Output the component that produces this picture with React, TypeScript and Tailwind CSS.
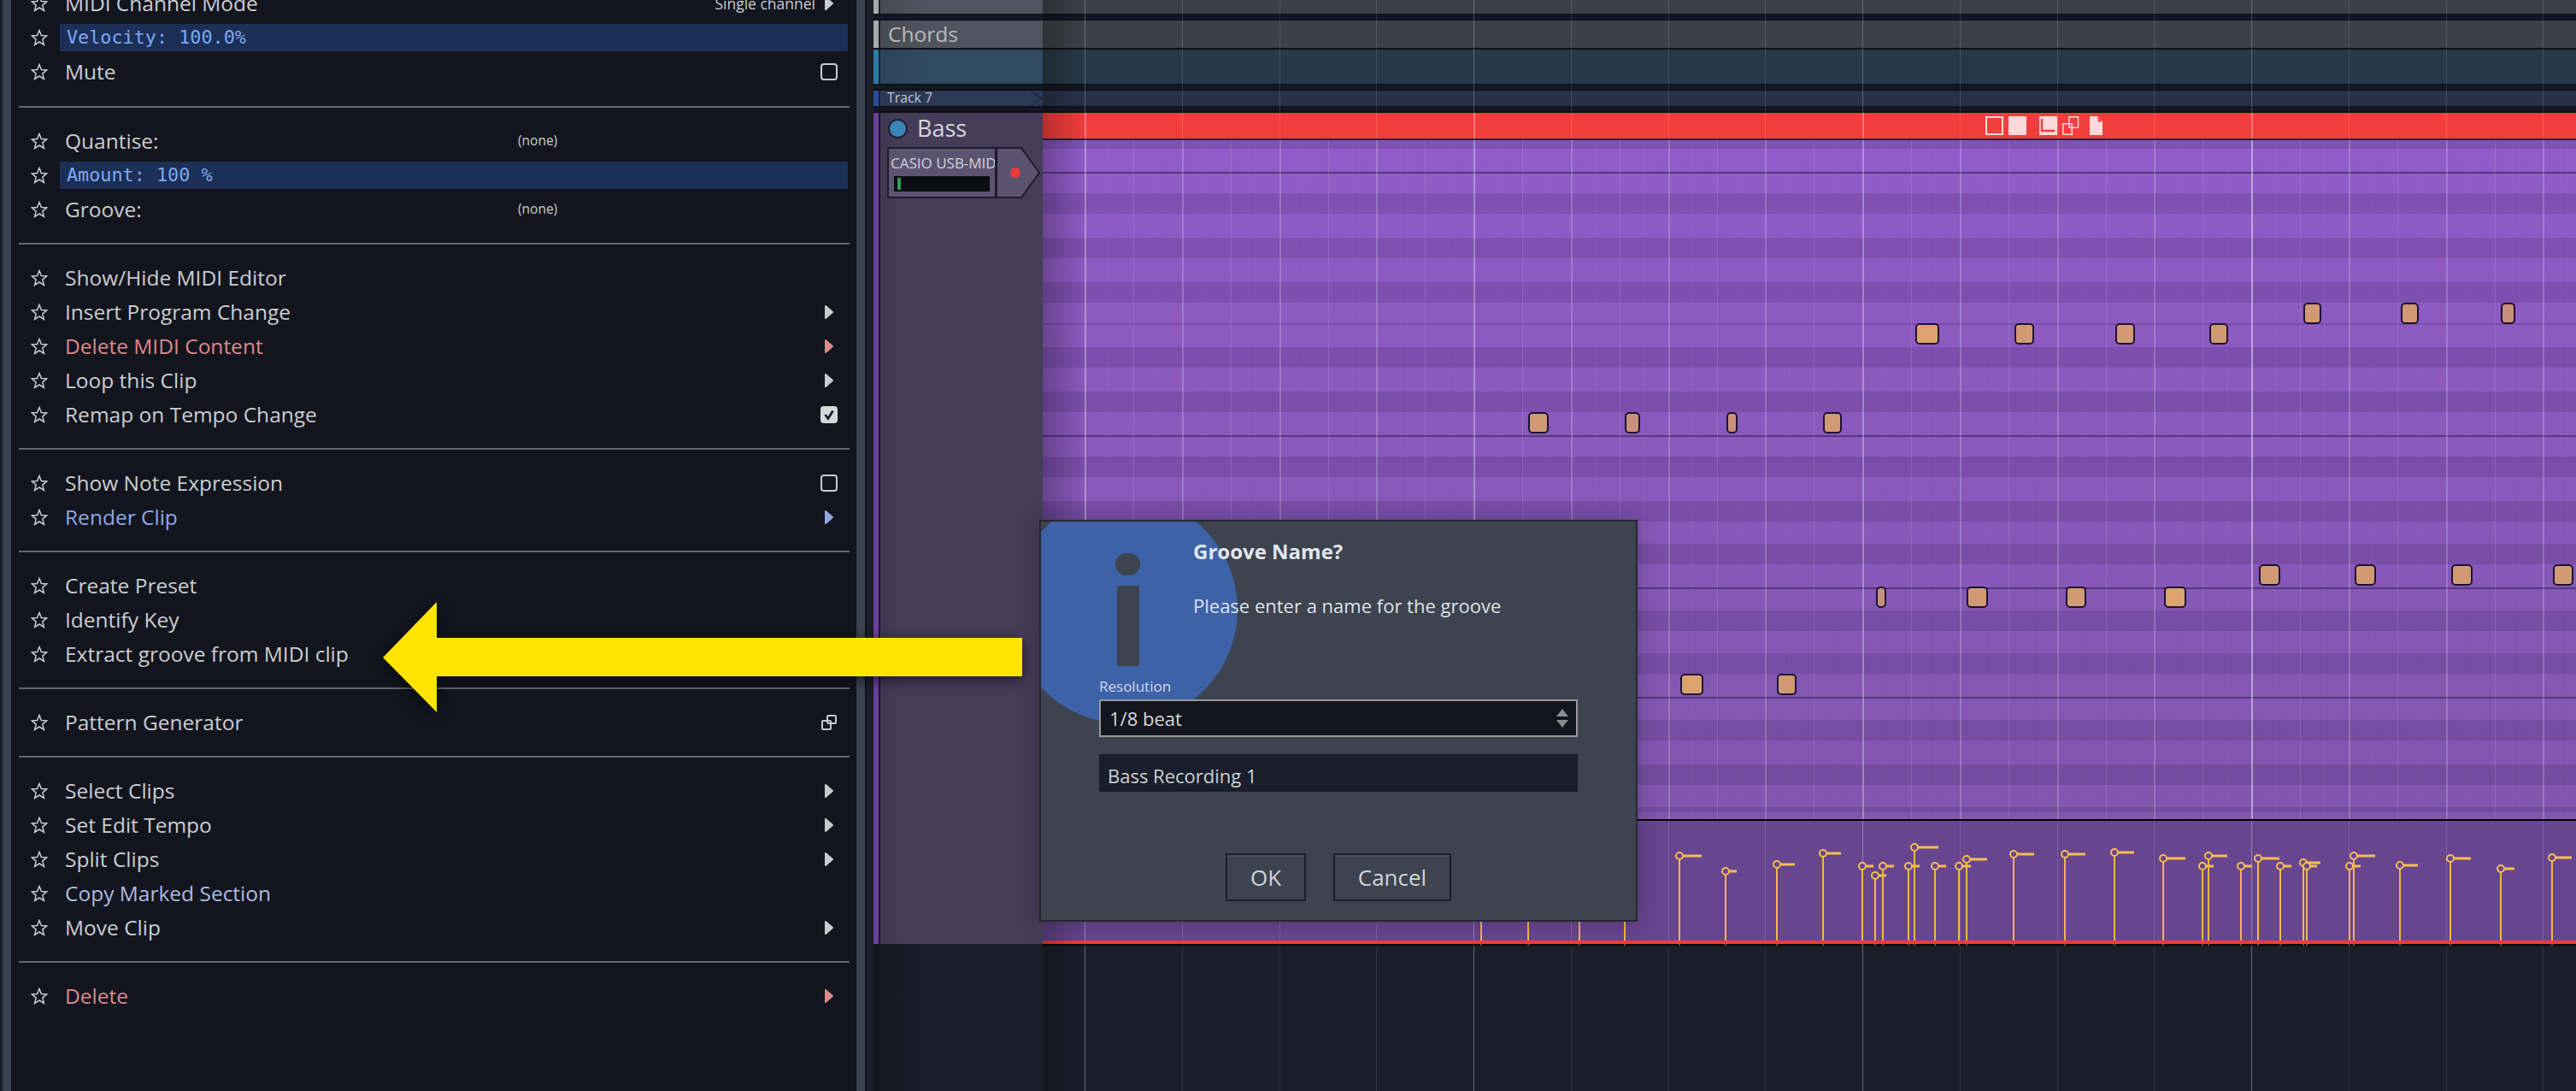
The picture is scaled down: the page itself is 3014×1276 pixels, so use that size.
import React from "react";

const GRID_START = 1269;
const GRID_STEP = 113.75;
const beats = Array.from({ length: 16 }, (_, i) => i);

// dark piano-key stripes, [top, bottom] in page pixels
const stripes = [
  [164, 174], [226, 250], [278, 302], [330, 354], [406, 430], [458, 482], [534, 558],
  [586, 610], [636, 660], [714, 738], [764, 788], [842, 866], [894, 918], [944, 950],
];
const octaveLines = [201, 378, 509, 687, 815];

// [left, right, top]
const notes = [
  [2241, 2269, 378], [2357, 2380, 378], [2475, 2498, 378], [2585, 2607, 378],
  [2695, 2716, 354], [2809, 2830, 354], [2926, 2943, 354],
  [1788, 1812, 482], [1901, 1919, 482], [2020, 2033, 482], [2133, 2155, 482],
  [2643, 2668, 660], [2755, 2780, 660], [2868, 2893, 660], [2987, 3011, 660],
  [2195, 2207, 686], [2301, 2326, 686], [2417, 2441, 686], [2532, 2558, 686],
  [1966, 1993, 788], [2079, 2102, 788],
];

// [x, y, tail end x]
const velocities = [
  [1732, 1030, 1760], [1787, 1030, 1815], [1847, 1030, 1875], [1900, 1006, 1916],
  [1964, 1001, 1991], [2018, 1019, 2032], [2078, 1011, 2100], [2132, 998, 2154],
  [2178, 1013, 2192], [2193, 1024, 2207], [2202, 1013, 2216], [2232, 1013, 2246],
  [2239, 991, 2268], [2263, 1013, 2277], [2291, 1013, 2306], [2300, 1005, 2325],
  [2355, 999, 2380], [2415, 999, 2440], [2473, 997, 2497], [2530, 1004, 2557],
  [2576, 1013, 2590], [2583, 1001, 2606], [2621, 1013, 2635], [2641, 1004, 2667],
  [2667, 1013, 2681], [2694, 1009, 2715], [2698, 1013, 2711], [2748, 1013, 2762],
  [2753, 1001, 2779], [2807, 1012, 2829], [2866, 1004, 2891], [2925, 1016, 2942],
  [2985, 1003, 3009],
];

function noteFill(width: number) {
  if (width >= 26) return "#dca36f";
  if (width >= 20) return "#d19a75";
  return "#c8907b";
}

function Star() {
  return (
    <svg viewBox="0 0 20 20" className="w-5 h-5 shrink-0">
      <polygon
        points="10,1.5 12.4,7.6 18.6,8 13.8,12.1 15.4,18.4 10,15 4.6,18.4 6.2,12.1 1.4,8 7.6,7.6"
        fill="none"
        stroke="#c9cbcf"
        strokeWidth="1.5"
        strokeLinejoin="miter"
      />
    </svg>
  );
}

function Arrow({ color = "#c9cbcf" }: { color?: string }) {
  return (
    <svg viewBox="0 0 12 18" className="w-3 h-[18px]">
      <path d="M2 2 L10 9 L2 16 Z" fill={color} stroke={color} strokeWidth="2" strokeLinejoin="round" />
    </svg>
  );
}

function Checkbox({ checked }: { checked?: boolean }) {
  if (checked) {
    return (
      <div className="w-5 h-5 rounded-[4px] bg-[#d6d7d9] flex items-center justify-center">
        <svg viewBox="0 0 20 20" className="w-5 h-5">
          <path d="M5.5 10 L9 14.5 L14.5 5.5" fill="none" stroke="#12151e" strokeWidth="2.6" />
        </svg>
      </div>
    );
  }
  return <div className="w-5 h-5 rounded-[4px] border-2 border-[#c9cbcf]" />;
}

function WindowIcon() {
  return (
    <svg viewBox="0 0 20 20" className="w-5 h-5" fill="none" stroke="#c9cbcf" strokeWidth="2">
      <rect x="8" y="2" width="10" height="9" rx="1" />
      <rect x="2" y="8" width="10" height="10" rx="1" />
    </svg>
  );
}

type RowProps = {
  label: string;
  color?: string;
  arrow?: boolean;
  right?: React.ReactNode;
  value?: string;
};

function MenuRow({ label, color = "text-[#cbcdd0]", arrow, right, value }: RowProps) {
  const arrowColor = color.includes("dc8") ? "#dc8a8a" : color.includes("8fa") ? "#8fa8e6" : "#c9cbcf";
  return (
    <div className="flex items-center h-10 pl-[22px] pr-[22px]">
      <Star />
      <span className={`ml-5 whitespace-nowrap ${value ? "w-[530px]" : ""} ${color}`}>{label}</span>
      {value && <span className="text-[15.5px] text-[#c9cbcf]">{value}</span>}
      {(arrow || right) && (
        <div className="ml-auto flex items-center gap-[6px]">
          {right}
          {arrow && (
            <div className="w-5 flex justify-center">
              <Arrow color={arrowColor} />
            </div>
          )}
        </div>
      )}
    </div>
  );
}

function SliderRow({ label }: { label: string }) {
  return (
    <div className="flex items-center h-10 pl-[22px] pr-[10px]">
      <Star />
      <div className="ml-[14px] flex-1 h-8 bg-[#1b2f57] pl-2 flex items-center font-['DejaVu_Sans_Mono',monospace] text-[21.8px] text-[#7faaf5]">
        {label}
      </div>
    </div>
  );
}

function Separator({ first }: { first?: boolean }) {
  return <div className={`h-[2px] bg-[#66676d] mx-2 mb-[19px] ${first ? "mt-5" : "mt-[19px]"}`} />;
}

function Menu() {
  return (
    <div className="w-[988px] h-full overflow-hidden bg-[#12151e] font-['Open_Sans',sans-serif] text-[24.5px]">
      <div className="-mt-4">
        <MenuRow
          label="MIDI Channel Mode"
          arrow
          right={<span className="text-[17.5px] text-[#c9cbcf]">Single channel</span>}
        />
        <SliderRow label="Velocity: 100.0%" />
        <MenuRow label="Mute" right={<Checkbox />} />
        <Separator first />
        <MenuRow label="Quantise:" value="(none)" />
        <SliderRow label="Amount: 100 %" />
        <MenuRow label="Groove:" value="(none)" />
        <Separator />
        <MenuRow label="Show/Hide MIDI Editor" />
        <MenuRow label="Insert Program Change" arrow />
        <MenuRow label="Delete MIDI Content" color="text-[#dc8a8a]" arrow />
        <MenuRow label="Loop this Clip" arrow />
        <MenuRow label="Remap on Tempo Change" right={<Checkbox checked />} />
        <Separator />
        <MenuRow label="Show Note Expression" right={<Checkbox />} />
        <MenuRow label="Render Clip" color="text-[#8fa8e6]" arrow />
        <Separator />
        <MenuRow label="Create Preset" />
        <MenuRow label="Identify Key" />
        <MenuRow label="Extract groove from MIDI clip" />
        <Separator />
        <MenuRow label="Pattern Generator" right={<WindowIcon />} />
        <Separator />
        <MenuRow label="Select Clips" arrow />
        <MenuRow label="Set Edit Tempo" arrow />
        <MenuRow label="Split Clips" arrow />
        <MenuRow label="Copy Marked Section" color="text-[#aebbe0]" />
        <MenuRow label="Move Clip" arrow />
        <Separator />
        <MenuRow label="Delete" color="text-[#dc8a8a]" arrow />
      </div>
    </div>
  );
}

function TrackSeparator({ h }: { h: string }) {
  return <div className={`${h} bg-[#141826] border-y-2 border-[#0d1017]`} />;
}

function ClipIcons() {
  return (
    <svg viewBox="0 0 137 22" className="w-[137px] h-[22px]" fill="none" stroke="#ffd9d9" strokeWidth="2">
      <rect x="1" y="1" width="19" height="20" />
      <rect x="27" y="0" width="21" height="22" fill="#ffd9d9" stroke="none" />
      <rect x="63" y="0" width="21" height="22" fill="#ffd9d9" stroke="none" />
      <path d="M66 3 V17 H81" stroke="#f23d3d" strokeWidth="2.5" />
      <g strokeWidth="1.5">
        <rect x="90.75" y="8.75" width="10.5" height="12.5" />
        <rect x="98" y="0.75" width="10.5" height="12.5" />
      </g>
      <path d="M122 0 H131 L137 7 V22 H122 Z" fill="#ffd9d9" stroke="none" />
      <path d="M131.5 1 L136 6.5 H131.5 Z" fill="#f23d3d" stroke="none" />
    </svg>
  );
}

function PianoStripes() {
  return (
    <svg viewBox="1220 164 1794 794" className="block w-[1794px] h-[794px]">
      <defs>
        <linearGradient id="rollFade" x1="0" y1="0" x2="0" y2="1">
          <stop offset="0" stopColor="#915cc8" />
          <stop offset="1" stopColor="#8156ae" />
        </linearGradient>
      </defs>
      <rect x="1220" y="164" width="1794" height="794" fill="url(#rollFade)" />
      {stripes.map(([a, b]) => (
        <rect key={a} x="1220" y={a} width="1794" height={b - a} fill="#2a1a50" opacity="0.16" />
      ))}
      {octaveLines.map((y) => (
        <rect key={y} x="1220" y={y} width="1794" height="2" fill="#553580" opacity={y === 378 ? 0.35 : 1} />
      ))}
    </svg>
  );
}

// lines sit on top of every row, only the notes and stems go above them
function GridOverlay() {
  return (
    <svg viewBox="1220 0 1794 1276" className="absolute inset-0 w-[1794px] h-[1276px]">
      {beats.map((k) => {
        const x = Math.round(GRID_START + k * GRID_STEP);
        const bright = k % 4 === 0;
        return (
          <g key={k} fill="#ffffff">
            <rect x={x} y="0" width="1" height="132" opacity={bright ? 0.24 : 0.12} />
            <rect x={x} y="132" width={bright ? 2 : 1} height="30" opacity={bright ? 0.3 : 0.15} />
            <rect x={x} y="164" width="2" height="794" opacity={k === 12 ? 0.45 : bright ? 0.32 : 0.2} />
            <rect x={x} y="960" width="1" height="140" opacity={bright ? 0.32 : 0.14} />
            <rect x={x} y="1106" width="1" height="170" opacity={bright ? 0.34 : 0.1} />
            <rect x={Math.round(x + GRID_STEP / 2)} y="164" width="1" height="794" opacity="0.12" />
            <rect x={Math.round(x + GRID_STEP / 4)} y="164" width="1" height="794" opacity="0.03" />
            <rect x={Math.round(x + (GRID_STEP * 3) / 4)} y="164" width="1" height="794" opacity="0.03" />
          </g>
        );
      })}
    </svg>
  );
}

function NotesAndStems() {
  return (
    <svg viewBox="1220 0 1794 1276" className="absolute inset-0 w-[1794px] h-[1276px]">
      {notes.map(([a, b, y]) => (
        <rect
          key={`${a}-${y}`}
          x={a + 1}
          y={y + 1}
          width={b - a - 2}
          height="23"
          rx="4"
          fill={noteFill(b - a)}
          stroke="#1c1233"
          strokeWidth="2"
        />
      ))}
      {velocities.map(([x, y, end]) => (
        <g key={`${x}-${y}`}>
          <rect x={x} y={y} width="2" height={1100 - y} fill="#f3b648" />
          <rect x={x} y="1104" width="2" height="2" fill="#6b5030" />
          <rect x={x + 4} y={y - 1.5} width={end - x - 4} height="3" fill="#f6bf52" />
          <circle cx={x + 1} cy={y} r="4" fill="#68458f" stroke="#f6bf52" strokeWidth="2" />
        </g>
      ))}
    </svg>
  );
}

function BassHeader() {
  return (
    <div className="flex items-stretch h-[972px]">
      <div className="w-[6px] bg-[#6b3f9c]" />
      <div className="w-[2px] bg-[#1d1a28]" />
      <div className="flex-1 bg-gradient-to-r from-[#3e3850] to-[#453d58] to-[12%] pl-2 pt-[7px]">
        <div className="flex items-center h-[23px] pl-[1px]">
          <div className="w-[23px] h-[23px] rounded-full bg-[#3a86b8] border-2 border-[#221d30]" />
          <span className="ml-[11px] text-[27px] leading-none text-[#d8d6dc] -mt-[2px]">Bass</span>
        </div>
        <div className="mt-[10px] flex items-stretch h-[60px]">
          <div className="w-[128px] border-2 border-[#1e1a2b] bg-[#5a5470] pl-[2px] overflow-hidden">
            <div className="text-[17px] leading-[26px] mt-[4px] text-[#d3d2d9] whitespace-nowrap overflow-hidden">
              CASIO USB-MIDI
            </div>
            <div className="mt-[2px] ml-[4px] w-[112px] h-[18px] bg-[#0c0d10] flex items-center pl-1">
              <div className="w-[4px] h-[14px] bg-[#2d9d57]" />
            </div>
          </div>
          <svg viewBox="0 0 52 60" className="w-[52px] h-[60px]">
            <path d="M0 1 H29 L50 30 L29 59 H0 Z" fill="#5a5470" stroke="#1e1a2b" strokeWidth="2" />
            <circle cx="22" cy="30" r="6" fill="#f03a3a" />
          </svg>
        </div>
      </div>
    </div>
  );
}

function TrackHeaders() {
  return (
    <div className="w-[198px] shrink-0 flex flex-col font-['Open_Sans',sans-serif]">
      <div className="h-4 flex">
        <div className="w-[6px] bg-[#a8a8a8]" />
        <div className="w-[2px] bg-[#1d2028]" />
        <div className="flex-1 bg-gradient-to-r from-[#474a53] to-[#50545e] to-[30%]" />
      </div>
      <TrackSeparator h="h-2" />
      <div className="h-8 flex">
        <div className="w-[6px] bg-[#a8a8a8]" />
        <div className="w-[2px] bg-[#1d2028]" />
        <div className="flex-1 bg-gradient-to-r from-[#474a53] to-[#50545e] to-[30%] pl-[9px] flex items-center text-[24.5px] text-[#b9bbbd]">
          Chords
        </div>
      </div>
      <div className="h-[2px] bg-[#0d1017]" />
      <div className="h-10 flex">
        <div className="w-[6px] bg-[#2a7ba8]" />
        <div className="w-[2px] bg-[#1d2028]" />
        <div className="flex-1 bg-gradient-to-r from-[#2c4358] to-[#324a60] to-[30%]" />
      </div>
      <TrackSeparator h="h-2" />
      <div className="h-[18px] flex">
        <div className="w-[6px] bg-[#2a4a9a]" />
        <div className="w-[2px] bg-[#1d2028]" />
        <div className="flex-1 bg-[#2d3a55] pl-2 flex items-center text-[15.8px] text-[#c3c8d2] relative">
          Track 7
          <svg viewBox="0 0 14 18" className="absolute right-0 top-0 w-[14px] h-[18px]">
            <path d="M0 0 L13 9 L0 18" fill="none" stroke="#232c42" strokeWidth="2" />
          </svg>
        </div>
      </div>
      <TrackSeparator h="h-2" />
      <BassHeader />
      <div className="flex-1 bg-gradient-to-r from-[#14171f] to-[#1a1e29] to-[30%]" />
    </div>
  );
}

function Timeline() {
  return (
    <div className="relative flex-1 flex flex-col">
      <div className="h-4 bg-[#3e4049]" />
      <TrackSeparator h="h-2" />
      <div className="h-8 bg-[#3e4049]" />
      <div className="h-[2px] bg-[#0d1017]" />
      <div className="h-10 bg-[#273946]" />
      <TrackSeparator h="h-2" />
      <div className="h-[18px] bg-[#27324a]" />
      <TrackSeparator h="h-2" />
      <div className="h-[30px] bg-[#f23d3d] flex items-center pl-[1103px]">
        <ClipIcons />
      </div>
      <div className="h-[2px] bg-[#2a1c40]" />
      <PianoStripes />
      <div className="h-[2px] bg-black" />
      <div className="h-[140px] bg-[#68458f]" />
      <div className="h-1 bg-[#f23d3d]" />
      <div className="h-[2px] bg-black" />
      <div className="flex-1 bg-[#1a1e29]" />
      <GridOverlay />
      <NotesAndStems />
      <div className="absolute left-0 top-0 bottom-0 w-[50px] bg-gradient-to-r from-black/25 to-transparent" />
    </div>
  );
}

function GrooveDialog() {
  return (
    <div className="absolute left-[1216px] top-[608px] w-[700px] h-[470px] bg-[#3d434f] border-2 border-[#23272f] overflow-hidden shadow-[0_0_24px_rgba(0,0,0,0.25)] font-['Open_Sans',sans-serif]">
      <div className="absolute left-[-36px] top-[-30px] w-[266px] h-[266px] rounded-full bg-[#3e62a8]" />
      <div className="absolute left-[87px] top-[37px] w-[29px] h-[26px] rounded-full bg-[#3d434f]" />
      <div className="absolute left-[89px] top-[75px] w-[26px] h-[94px] bg-[#3d434f]" />
      <div className="relative">
        <div className="pl-[178px] pt-[19px] text-[24px] leading-8 font-bold text-[#e4e7ee]">Groove Name?</div>
        <div className="pl-[178px] mt-8 text-[22px] leading-[30px] text-[#dfe2e8]">Please enter a name for the groove</div>
        <div className="pl-[68px] mt-[69px] text-[17px] leading-[22px] text-[#d2d8e6]">Resolution</div>
        <div className="ml-[68px] mt-1 w-[560px] h-11 border-2 border-[#9a9a9a] bg-[#12151e] flex items-center justify-between pl-[10px] pr-[9px] text-[22px] text-[#d8d8d8]">
          1/8 beat
          <svg viewBox="0 0 14 22" className="w-[14px] h-[22px]">
            <path d="M7 0 L14 9 H0 Z M0 13 H14 L7 22 Z" fill="#8a8c90" />
          </svg>
        </div>
        <div className="ml-[68px] mt-5 w-[560px] h-11 bg-[#1a1e2a] pl-[10px] pt-[7px] flex items-center text-[22px] text-[#cfd1d4]">
          Bass Recording 1
        </div>
        <div className="ml-[216px] mt-[72px] flex gap-8 text-[26px] text-[#d2d4d8]">
          <div className="w-[94px] h-14 border-2 border-[#1c1f26] bg-[#3d434f] flex items-center justify-center shadow-[inset_0_2px_0_rgba(255,255,255,0.06)]">
            OK
          </div>
          <div className="w-[138px] h-14 border-2 border-[#1c1f26] bg-[#3d434f] flex items-center justify-center shadow-[inset_0_2px_0_rgba(255,255,255,0.06)]">
            Cancel
          </div>
        </div>
      </div>
    </div>
  );
}

export default function App() {
  return (
    <div className="relative w-[3014px] h-[1276px] overflow-hidden flex bg-[#1a1e29]">
      <div className="w-[3px] bg-[#1a1e29]" />
      <div className="w-[10px] bg-[#3c4350]" />
      <div className="w-px bg-[#0d1017]" />
      <Menu />
      <div className="w-[10px] bg-[#3c4350]" />
      <div className="w-[2px] bg-[#0d1017]" />
      <div className="w-2 bg-[#1a1e2a]" />
      <TrackHeaders />
      <Timeline />
      <GrooveDialog />
      <svg
        viewBox="440 700 760 140"
        className="absolute left-[440px] top-[700px] w-[760px] h-[140px] drop-shadow-[0_4px_8px_rgba(0,0,0,0.6)]"
      >
        <polygon points="448,769 511,704 511,746 1196,746 1196,791 511,791 511,833" fill="#ffe400" />
      </svg>
    </div>
  );
}
